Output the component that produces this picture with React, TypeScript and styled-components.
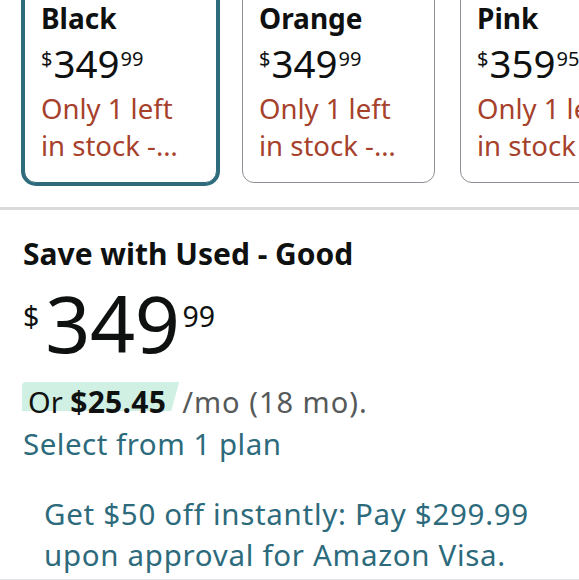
import React from "react";
import styled, { createGlobalStyle } from "styled-components";

const GlobalStyle = createGlobalStyle`
  html, body {
    margin: 0;
    padding: 0;
    background: #ffffff;
  }
  body {
    font-family: "Noto Sans", "Open Sans", Arial, sans-serif;
    color: #0f1111;
    overflow: hidden;
  }
`;

const Page = styled.div`
  width: 579px;
  height: 580px;
  overflow: hidden;
  display: flex;
  flex-direction: column;
  border-bottom: 1px solid #e3e6e6;
  box-sizing: border-box;
`;

const CardRow = styled.div`
  display: flex;
  gap: 25px;
  padding-left: 24px;
  margin-top: -16px;
  margin-bottom: 24px;
`;

const Card = styled.div<{ $selected?: boolean }>`
  flex: 0 0 193px;
  box-sizing: border-box;
  padding: 15px 16px 18px;
  border-radius: 12px;
  border: 1px solid ${(p) => (p.$selected ? "#2e6c7d" : "#8d9096")};
  box-shadow: ${(p) => (p.$selected ? "0 0 0 3px #2e6c7d" : "none")};
  background: #fff;
`;

const CardTitle = styled.div`
  font-weight: 700;
  font-size: 28px;
  line-height: 37px;
  color: #0f1111;
`;

const CardPrice = styled.div`
  display: flex;
  align-items: flex-start;
  margin-top: 6px;
  height: 41px;
  color: #0f1111;
`;

const CardSup = styled.span`
  font-size: 20px;
  line-height: 1;
  margin-top: 6px;
`;

const CardWhole = styled.span`
  font-size: 38.5px;
  line-height: 41px;
  margin: 0 1px;
`;

const Stock = styled.div`
  font-size: 27.5px;
  line-height: 37px;
  color: #a6412b;
  display: -webkit-box;
  -webkit-line-clamp: 2;
  -webkit-box-orient: vertical;
  overflow: hidden;
  margin-top: 6px;
`;

const Divider = styled.div`
  height: 3px;
  background: #d9dbdb;
`;

const Section = styled.div`
  padding: 26px 23px 0;
  display: flex;
  flex-direction: column;
`;

const SectionTitle = styled.div`
  font-weight: 700;
  font-size: 30px;
  line-height: 36px;
  color: #0f1111;
`;

const BigPrice = styled.div`
  display: flex;
  align-items: flex-start;
  margin-top: 11px;
  color: #0f1111;
`;

const BigSup = styled.span`
  font-size: 28.5px;
  line-height: 1;
  margin-top: 19px;
`;

const BigWhole = styled.span`
  font-size: 79px;
  line-height: 1;
  margin: 0 3px 0 6px;
  letter-spacing: -0.5px;
`;

const Monthly = styled.div`
  margin-top: 19px;
  font-size: 29px;
  line-height: 42px;
  color: #565959;
`;

const HighlightWrap = styled.span`
  position: relative;
  z-index: 0;
`;

const Highlight = styled.span`
  position: relative;
  color: #0f1111;
  padding: 0 13px 0 5px;
  &::before {
    content: "";
    position: absolute;
    left: -1px;
    right: 0;
    top: 0;
    bottom: 10px;
    background: #cff0e2;
    border-top-left-radius: 4px;
    clip-path: polygon(0 0, 100% 0, calc(100% - 8px) 100%, 0 100%);
    z-index: -1;
  }
`;

const Bold = styled.b`
  font-weight: 700;
  font-size: 30px;
  letter-spacing: 0.3px;
`;

const Rest = styled.span`
  margin-left: 3px;
  letter-spacing: 1px;
`;

const Link = styled.div`
  font-size: 29.5px;
  line-height: 42px;
  letter-spacing: 0.5px;
  color: #2d6b7c;
`;

const Offer = styled.div`
  margin-top: 28px;
  padding-left: 21px;
  font-size: 29.5px;
  line-height: 41px;
  letter-spacing: 0.7px;
  color: #2d6b7c;
`;

type CardData = { name: string; whole: string; cents: string; selected?: boolean };

const cards: CardData[] = [
  { name: "Black", whole: "349", cents: "99", selected: true },
  { name: "Orange", whole: "349", cents: "99" },
  { name: "Pink", whole: "359", cents: "95" },
];

export default function App() {
  return (
    <>
      <GlobalStyle />
      <Page>
        <CardRow>
          {cards.map((c) => (
            <Card key={c.name} $selected={c.selected}>
              <CardTitle>{c.name}</CardTitle>
              <CardPrice>
                <CardSup>$</CardSup>
                <CardWhole>{c.whole}</CardWhole>
                <CardSup>{c.cents}</CardSup>
              </CardPrice>
              <Stock>Only 1 left in stock - order soon.</Stock>
            </Card>
          ))}
        </CardRow>
        <Divider />
        <Section>
          <SectionTitle>Save with Used - Good</SectionTitle>
          <BigPrice>
            <BigSup>$</BigSup>
            <BigWhole>349</BigWhole>
            <BigSup>99</BigSup>
          </BigPrice>
          <Monthly>
            <HighlightWrap>
              <Highlight>
                Or <Bold>$25.45</Bold>
              </Highlight>
            </HighlightWrap>
            <Rest>/mo (18 mo).</Rest>
          </Monthly>
          <Link>Select from 1 plan</Link>
          <Offer>
            Get $50 off instantly: Pay $299.99 upon approval for Amazon Visa.
          </Offer>
        </Section>
      </Page>
    </>
  );
}
